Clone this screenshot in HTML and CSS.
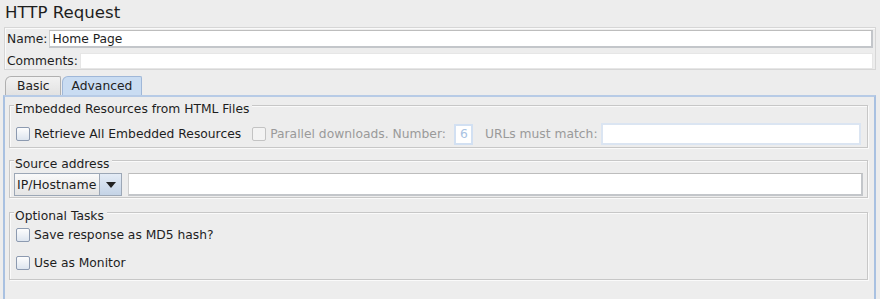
FILE: index.html
```html
<!DOCTYPE html>
<html lang="en">
<head>
  <meta charset="UTF-8" />
  <title>HTTP Request</title>
  <link rel="stylesheet" href="styles.css">
</head>
<body>

<div class="title">HTTP Request</div>

<div class="name-panel">
  <div class="row">
    <label>Name:</label>
    <div class="field name-field">Home Page</div>
  </div>
  <div class="row comments-row">
    <label>Comments:</label>
    <div class="field comments-field"></div>
  </div>
</div>

<div class="tabs">
  <div class="tab">Basic</div>
  <div class="tab selected">Advanced</div>
</div>

<div class="tab-body">

  <div class="group embedded">
    <div class="group-title">Embedded Resources from HTML Files</div>
    <div class="line">
      <span class="check"></span>
      <span class="check-label">Retrieve All Embedded Resources</span>
      <span class="check disabled"></span>
      <span class="check-label disabled">Parallel downloads. Number:</span>
      <div class="field number-field">6</div>
      <span class="check-label disabled">URLs must match:</span>
      <div class="field match-field"></div>
    </div>
  </div>

  <div class="group source">
    <div class="group-title">Source address</div>
    <div class="line">
      <div class="combo">
        <span class="combo-text">IP/Hostname</span>
        <span class="combo-btn"><span class="arrow"></span></span>
      </div>
      <div class="field address-field"></div>
    </div>
  </div>

  <div class="group tasks">
    <div class="group-title">Optional Tasks</div>
    <div class="line">
      <span class="check"></span>
      <span class="check-label">Save response as MD5 hash?</span>
    </div>
    <div class="line">
      <span class="check"></span>
      <span class="check-label">Use as Monitor</span>
    </div>
  </div>

</div>

</body>
</html>
```

FILE: styles.css
```css
body {
  margin: 0;
  background: #ededed;
  color: #1e1e1e;
  font-family: "DejaVu Sans", "Liberation Sans", sans-serif;
  font-size: 12.3px;
  overflow: hidden;
}
.title {
  font-size: 16.6px;
  padding: 3px 5px 0;
  height: 24px;
}

/* name / comments box */
.name-panel {
  margin: 0 4px 0 4px;
  border: 1px solid #d6d6d6;
  box-shadow: inset 1px 1px 0 #fafafa;
  padding: 2px 2px 0 2px;
}
.name-panel .row {
  display: flex;
  align-items: center;
  height: 18px;
}
.name-panel .comments-row {
  margin-top: 5px;
  height: 16px;
}
.name-panel label {
  padding-right: 2px;
}
.field {
  background: white;
  border: 1px solid #cfcfcf;
  border-top-color: #bdbdbd;
  box-sizing: border-box;
}
.name-field {
  flex: 1;
  height: 18px;
  line-height: 16px;
  padding-left: 2px;
  border-right: 2px solid #c3c6ca;
  border-bottom: 2px solid #c3c6ca;
}
.comments-field {
  flex: 1;
  height: 16px;
  border-color: #e6e6e6;
}

/* tabs */
.tabs {
  display: flex;
  margin: 6px 0 0 5px;
  gap: 1px;
  height: 19px;
}
.tab {
  padding: 2px 10px 0 11px;
  border: 1px solid #b0b0b0;
  border-bottom: none;
  border-radius: 6px 2px 0 0;
  background: linear-gradient(#f2f2f2, #e2e2e2);
  color: #222;
}
.tab.selected {
  background: #c9dcf2;
  border-color: #9fb7d8;
  padding: 2px 9px 0 9px;
}

/* tab content */
.tab-body {
  margin: 0 4px 0 3px;
  height: 210px;
  border: 2px solid #a9c1e1;
  border-bottom: none;
  border-top-color: #b7cbe6;
  padding: 0 6px 0 4px;
}

/* titled group boxes */
.group {
  padding: 0 4px 2px 5px;
  border: 1px solid #c7c7c7;
  box-shadow: 1px 1px 0 #fafafa, inset 1px 1px 0 #fafafa;
}
.group-title {
  width: fit-content;
  margin: -4px 0 0 -1px;
  padding: 0 3px 0 1px;
  line-height: 15px;
  background: #ededed;
}
.embedded {
  margin-top: 8px;
}
.source {
  margin-top: 12px;
  padding-bottom: 1px;
}
.tasks {
  margin-top: 14px;
  padding-bottom: 9px;
}
.line {
  display: flex;
  align-items: center;
}
.check {
  width: 12px;
  height: 12px;
  border: 1px solid #8c9ab0;
  border-radius: 2px;
  background: linear-gradient(#fdfdfd, #dde5ef);
  margin: 0 4px 0 1px;
  flex: none;
}
.check.disabled {
  border-color: #c3c3c3;
  background: #f3f3f3;
  margin-left: 11px;
}
.check-label.disabled {
  color: #9a9a9a;
}
.embedded .line {
  padding-top: 6px;
}
.number-field {
  width: 19px;
  height: 21px;
  margin: 0 12px 0 8px;
  border: 2px solid #d2e0f2;
  color: #a9c2e2;
  line-height: 17px;
  padding-left: 4px;
}
.match-field {
  flex: 1;
  height: 22px;
  margin: 0 2px 0 3px;
  border: 2px solid #dbe5f2;
}
.source .line {
  padding-top: 1px;
}
.combo {
  display: flex;
  height: 23px;
  width: 108px;
  border: 1px solid #9ca7b6;
  box-sizing: border-box;
  margin-left: -1px;
  background: linear-gradient(#fafafa, #e4e4e4);
  font-size: 12.5px;
}
.combo-text {
  flex: 1;
  padding-left: 2px;
  line-height: 21px;
  border-right: 1px solid #9ca7b6;
}
.combo-btn {
  width: 21px;
  display: flex;
  align-items: center;
  justify-content: center;
  background: linear-gradient(#e4ecf6, #c4d3e6);
}
.arrow {
  border-left: 5px solid transparent;
  border-right: 5px solid transparent;
  border-top: 6px solid #222;
}
.address-field {
  flex: 1;
  height: 23px;
  margin-left: 6px;
  border-right: 2px solid #c3c6ca;
  border-bottom: 2px solid #c3c6ca;
}
.tasks .line {
  height: 14px;
  margin-top: 4px;
}
.tasks .line + .line {
  margin-top: 14px;
}
```
